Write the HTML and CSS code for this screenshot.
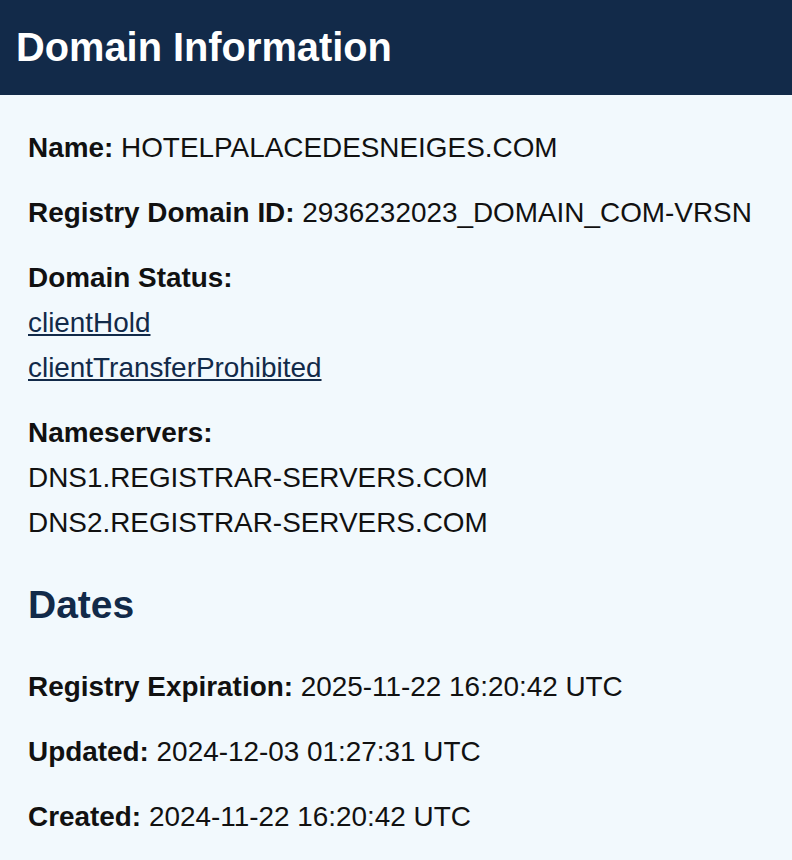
FILE: index.html
```html
<!DOCTYPE html>
<html lang="en">
<head>
<meta charset="utf-8">
<title>Domain Information</title>
<link rel="stylesheet" href="styles.css">
</head>
<body>
<header class="page-header">
  <h1 class="page-title">Domain Information</h1>
</header>
<main class="content">
  <div class="field"><span class="label">Name:</span> HOTELPALACEDESNEIGES.COM</div>
  <div class="field"><span class="label">Registry Domain ID:</span> 2936232023_DOMAIN_COM-VRSN</div>
  <div class="field">
    <div class="label">Domain Status:</div>
    <div class="line"><a href="#" class="status-link">clientHold</a></div>
    <div class="line"><a href="#" class="status-link">clientTransferProhibited</a></div>
  </div>
  <div class="field">
    <div class="label">Nameservers:</div>
    <div class="line">DNS1.REGISTRAR-SERVERS.COM</div>
    <div class="line">DNS2.REGISTRAR-SERVERS.COM</div>
  </div>
  <h2 class="section-title">Dates</h2>
  <div class="field"><span class="label">Registry Expiration:</span> 2025-11-22 16:20:42 UTC</div>
  <div class="field"><span class="label">Updated:</span> 2024-12-03 01:27:31 UTC</div>
  <div class="field"><span class="label">Created:</span> 2024-11-22 16:20:42 UTC</div>
</main>
</body>
</html>
```
FILE: styles.css
```css
html, body {
  margin: 0;
  padding: 0;
}
body {
  background: #f2f9fd;
  font-family: "Liberation Sans", Arial, Helvetica, sans-serif;
  color: #111111;
  font-size: 27.9px;
}
.page-header {
  background: #122a49;
  height: 95px;
  display: flex;
  align-items: center;
  padding: 0 16px;
}
.page-title {
  margin: 0;
  color: #ffffff;
  font-size: 39.8px;
  font-weight: 700;
  line-height: 1;
}
.content {
  padding: 30px 28px 20px;
}
.field {
  line-height: 45px;
  margin-bottom: 20px;
}
.label {
  font-weight: 700;
}
.status-link {
  color: #122a49;
  text-decoration: underline;
}
.section-title {
  margin: 37px 0 35px;
  color: #122a49;
  font-size: 39px;
  font-weight: 700;
  line-height: 1.2;
}
```
